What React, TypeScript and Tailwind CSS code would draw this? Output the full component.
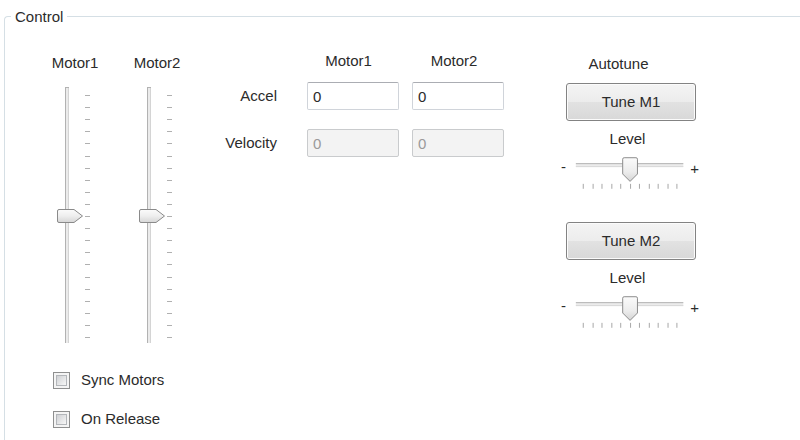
import React from "react";

// Windows 7 style "Control" group box

function VerticalSlider() {
  const ticks = Array.from({ length: 21 }, (_, i) => 8 + i * 12.1);
  return (
    <svg width="40" height="256" viewBox="0 0 40 256" className="ml-[5px] mt-[15px] block">
      <defs>
        <linearGradient id="vthumb" x1="0" y1="0" x2="0" y2="1">
          <stop offset="0" stopColor="#fbfbfb" />
          <stop offset="0.5" stopColor="#eeeeee" />
          <stop offset="1" stopColor="#d6d6d6" />
        </linearGradient>
      </defs>
      <rect x="10" y="0" width="4" height="256" fill="#ebebeb" />
      <rect x="10" y="0" width="1" height="256" fill="#b2b2b2" />
      <rect x="13" y="0" width="1" height="256" fill="#d4d4d4" />
      <rect x="10" y="0" width="4" height="1" fill="#b2b2b2" />
      {ticks.map((y, i) => (
        <rect key={i} x="30" y={Math.round(y)} width="5" height="1" fill="#b0b0b0" />
      ))}
      <path
        d="M4,122.5 H19 L27.5,129 L19,135.5 H4 A1.5,1.5 0 0 1 2.5,134 V124 A1.5,1.5 0 0 1 4,122.5 Z"
        fill="url(#vthumb)"
        stroke="#8a8a8a"
      />
    </svg>
  );
}

function HorizontalSlider({ id }: { id: string }) {
  const ticks = Array.from({ length: 11 }, (_, i) => 17 + i * 9.5);
  return (
    <div className="flex items-start h-[33px]">
      <span className="w-[5px] mt-[1px]">-</span>
      <svg width="124" height="33" viewBox="0 0 124 33" className="block">
        <defs>
          <linearGradient id={id} x1="0" y1="0" x2="0" y2="1">
            <stop offset="0" stopColor="#fbfbfb" />
            <stop offset="0.6" stopColor="#ececec" />
            <stop offset="1" stopColor="#d4d4d4" />
          </linearGradient>
        </defs>
        <rect x="10" y="6" width="109" height="4" fill="#ebebeb" />
        <rect x="10" y="6" width="109" height="1" fill="#b4b4b4" />
        <rect x="10" y="9" width="109" height="1" fill="#d8d8d8" />
        {ticks.map((x, i) => (
          <rect key={i} x={Math.round(x)} y="27" width="1" height="5" fill="#a6a6a6" />
        ))}
        <path
          d="M59,0.5 H71 A1.5,1.5 0 0 1 72.5,2 V17 L65,24.5 L57.5,17 V2 A1.5,1.5 0 0 1 59,0.5 Z"
          fill={`url(#${id})`}
          stroke="#8a8a8a"
        />
      </svg>
      <span className="ml-[2px] mt-[3px]">+</span>
    </div>
  );
}

function TuneBlock({ label, id, first }: { label: string; id: string; first?: boolean }) {
  return (
    <div className={first ? "mt-[10px]" : "mt-[32px]"}>
      <button className="ml-[5px] w-[130px] h-[38px] rounded-[3px] border border-[#838383] bg-[linear-gradient(#f4f4f4_0%,#ececec_50%,#e2e2e2_50%,#d8d8d8_100%)] shadow-[inset_0_0_0_1px_#fbfbfb] text-[#2b2b2b]">
        {label}
      </button>
      <div className="mt-[9px] text-center pr-[5px]">Level</div>
      <div className="mt-[9px]">
        <HorizontalSlider id={id} />
      </div>
    </div>
  );
}

function Checkbox({ label }: { label: string }) {
  return (
    <div className="flex items-center h-[18px] gap-[11px] ml-[3px]">
      <div className="w-[17px] h-[17px] border border-[#8e8f8f] bg-[#f4f4f4] p-[2px]">
        <div className="w-full h-full border border-[#b3b6ba] bg-[linear-gradient(135deg,#cfd1d4,#f7f7f7)]" />
      </div>
      <span>{label}</span>
    </div>
  );
}

function TextBox({ disabled }: { disabled?: boolean }) {
  return (
    <input
      readOnly
      disabled={disabled}
      value="0"
      className={
        disabled
          ? "w-[92px] h-[28px] px-[5px] rounded-[2px] border border-[#c9cbcd] bg-[#f3f3f3] text-[#9a9a9a] outline-none"
          : "w-[92px] h-[28px] px-[5px] rounded-[2px] border border-[#d0d4da] border-t-[#abadb3] bg-white text-[#2b2b2b] outline-none"
      }
    />
  );
}

export default function App() {
  return (
    <div className="w-[800px] h-[440px] overflow-hidden bg-white text-[15px] leading-[18px] text-[#2b2b2b] font-['Liberation_Sans',Arial,sans-serif]">
      <div className="relative mt-[16px] ml-[4px] h-[424px] border-l border-t border-[#d5dfe5] rounded-tl-[4px]">
        <span className="absolute left-[6px] top-[-9px] bg-white px-[4px]">Control</span>

        <div className="flex items-start">
          {/* vertical motor sliders + options */}
          <div className="ml-[45px] pt-[37px] flex flex-col">
            <div className="flex gap-[32px]">
              <div className="w-[50px]">
                <div className="text-center">Motor1</div>
                <VerticalSlider />
              </div>
              <div className="w-[50px]">
                <div className="text-center">Motor2</div>
                <VerticalSlider />
              </div>
            </div>
            <div className="mt-[28px]">
              <Checkbox label="Sync Motors" />
            </div>
            <div className="mt-[21px]">
              <Checkbox label="On Release" />
            </div>
          </div>

          {/* accel / velocity */}
          <div className="ml-[35px] pt-[35px] flex flex-col">
            <div className="flex gap-[13px]">
              <div className="w-[77px]" />
              <div className="w-[92px] text-center pr-[9px]">Motor1</div>
              <div className="w-[92px] text-center pr-[8px]">Motor2</div>
            </div>
            <div className="mt-[12px] flex items-center gap-[13px]">
              <div className="w-[77px] text-right pr-[17px]">Accel</div>
              <TextBox />
              <TextBox />
            </div>
            <div className="mt-[19px] flex items-center gap-[13px]">
              <div className="w-[77px] text-right pr-[17px]">Velocity</div>
              <TextBox disabled />
              <TextBox disabled />
            </div>
          </div>

          {/* autotune */}
          <div className="ml-[57px] pt-[38px] w-[138px] flex flex-col">
            <div className="text-center pr-[23px]">Autotune</div>
            <TuneBlock label="Tune M1" id="ht1" first />
            <TuneBlock label="Tune M2" id="ht2" />
          </div>
        </div>
      </div>
    </div>
  );
}
